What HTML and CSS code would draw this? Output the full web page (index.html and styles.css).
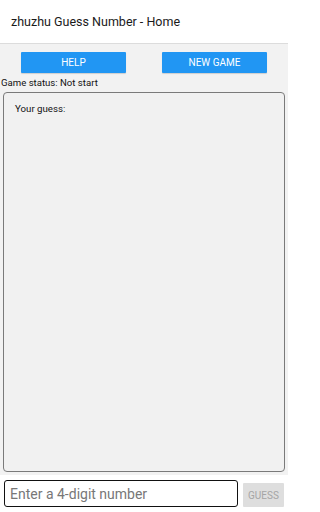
FILE: index.html
```html
<!DOCTYPE html>
<html>
<head>
<meta charset="utf-8">
<link rel="stylesheet" href="styles.css">
</head>
<body>
<div class="app">
  <header class="header">zhuzhu Guess Number - Home</header>
  <main class="main">
    <div class="actions">
      <button class="btn">HELP</button>
      <button class="btn">NEW GAME</button>
    </div>
    <div class="status">Game status: Not start</div>
    <div class="panel">
      <div class="panel-label">Your guess:</div>
    </div>
  </main>
  <footer class="footer">
    <input class="input" type="text" placeholder="Enter a 4-digit number">
    <button class="guess" disabled>GUESS</button>
  </footer>
</div>
</body>
</html>
```

FILE: styles.css
```css
* { box-sizing: border-box; }
html, body { margin: 0; padding: 0; }
body {
  width: 288px;
  height: 512px;
  overflow: hidden;
  font-family: Roboto, "Noto Sans", sans-serif;
  color: #111;
  background: #fff;
}
.app {
  display: flex;
  flex-direction: column;
  height: 512px;
}
.header {
  height: 44px;
  flex: none;
  display: flex;
  align-items: center;
  padding-left: 11px;
  padding-bottom: 1px;
  font-size: 12.5px;
  color: #1a1a1a;
  border-bottom: 1px solid #dcdcdc;
  background: #fff;
}
.main {
  height: 431px;
  flex: none;
  background: #f2f2f2;
  display: flex;
  flex-direction: column;
}
.actions {
  display: flex;
  gap: 36px;
  padding: 8px 0 0 21px;
}
.btn {
  width: 105px;
  height: 21px;
  border: none;
  border-radius: 1px;
  background: #2196f3;
  color: #fff;
  font-family: Roboto, sans-serif;
  font-size: 10px;
  padding: 0;
  box-shadow: 0 1px 1px rgba(0,0,0,0.15);
}
.status {
  font-size: 9.6px;
  line-height: 12px;
  margin-top: 4px;
  padding-left: 1px;
  color: #111;
}
.panel {
  flex: 1;
  margin: 3px;
  border: 1px solid #7a7a7a;
  border-radius: 4px;
  background: #f1f1f1;
  padding: 10px 11px;
}
.panel-label {
  font-size: 9.7px;
  line-height: 12px;
  color: #111;
}
.footer {
  flex: 1;
  display: flex;
  align-items: flex-start;
  padding: 5px 4px 0 4px;
  gap: 5px;
}
.input {
  width: 234px;
  height: 27px;
  border: 1px solid #111;
  border-radius: 3px;
  padding: 0 5px;
  font-family: Roboto, sans-serif;
  font-size: 14px;
  background: #fff;
  outline: none;
}
.input::placeholder { color: #777; }
.guess {
  margin-top: 3px;
  width: 41px;
  height: 24px;
  border: none;
  border-radius: 1px;
  background: #dedede;
  color: #a5a5a5;
  font-family: Roboto, sans-serif;
  font-size: 10px;
  padding: 0;
}
```
